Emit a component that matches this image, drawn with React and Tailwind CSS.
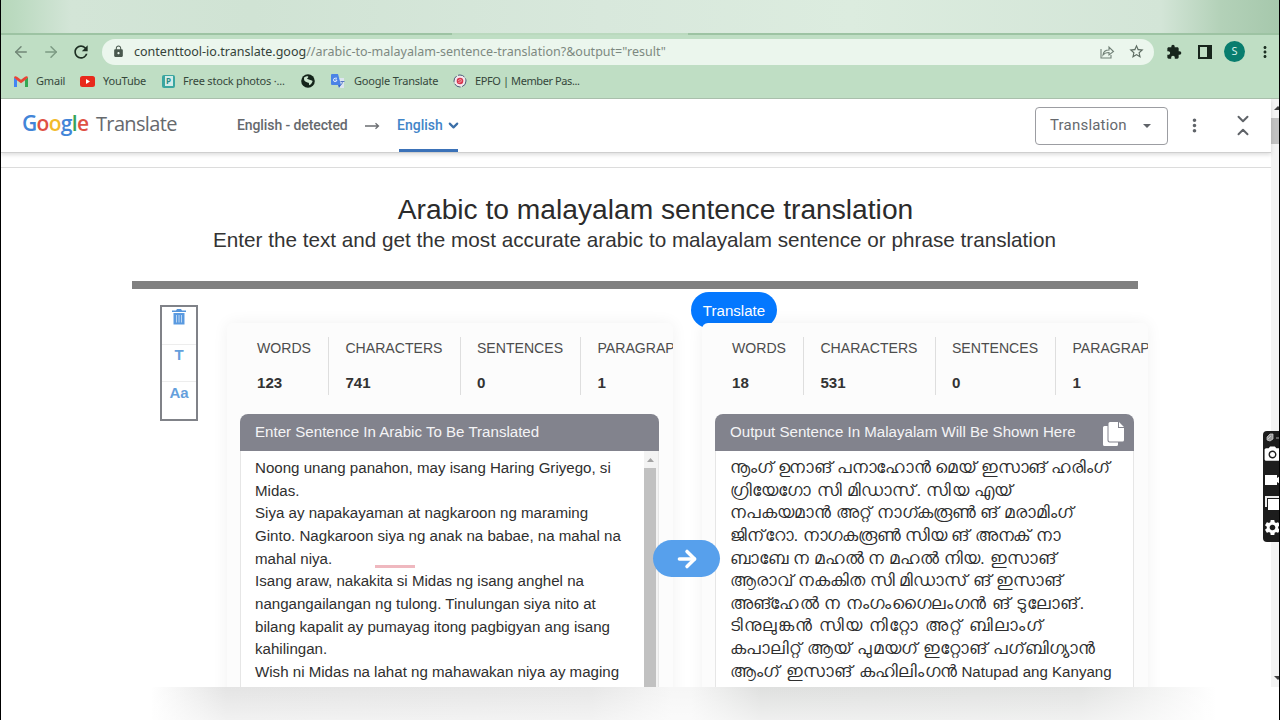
import React from 'react'
import { MdLock, MdRefresh, MdStarBorder, MdExtension, MdMoreVert, MdSettings, MdPhotoCamera } from 'react-icons/md'
import { ArrowLeft, ArrowRight, ChevronDown, ChevronUp } from 'lucide-react'

const sourceLines = [
  'Noong unang panahon, may isang Haring Griyego, si',
  'Midas.',
  'Siya ay napakayaman at nagkaroon ng maraming',
  'Ginto. Nagkaroon siya ng anak na babae, na mahal na',
  'mahal niya.',
  'Isang araw, nakakita si Midas ng isang anghel na',
  'nangangailangan ng tulong. Tinulungan siya nito at',
  'bilang kapalit ay pumayag itong pagbigyan ang isang',
  'kahilingan.',
  'Wish ni Midas na lahat ng mahawakan niya ay maging',
]

const outputLines = [
  { text: 'നൂംഗ് ഉനാങ് പനാഹോൻ മെയ് ഇസാങ് ഹരിംഗ്', spacing: 'tracking-[-0.35px]' },
  { text: 'ഗ്രിയേഗോ സി മിഡാസ്. സിയ എയ്', spacing: 'tracking-[0.2px]' },
  { text: 'നപകയമാൻ അറ്റ് നാഗ്കരൂൺ ങ് മരാമിംഗ്', spacing: 'tracking-normal' },
  { text: 'ജിന്\u200cറോ. നാഗകരൂൺ സിയ ങ് അനക് നാ', spacing: 'tracking-[-0.2px]' },
  { text: 'ബാബേ ന മഹൽ ന മഹൽ നിയ. ഇസാങ്', spacing: 'tracking-normal' },
  { text: 'ആരാവ് നകകിത സി മിഡാസ് ങ് ഇസാങ്', spacing: 'tracking-[-0.1px]' },
  { text: 'അങ്ഹേൽ ന നംഗംഗൈലംഗൻ ങ് ടുലോങ്.', spacing: 'tracking-[0.4px]' },
  { text: 'ടിനുലുങ്കൻ സിയ നിറ്റോ അറ്റ് ബിലാംഗ്', spacing: 'tracking-[1.05px]' },
  { text: 'കപാലിറ്റ് ആയ് പുമയഗ് ഇറ്റോങ് പഗ്\u200cബിഗ്യാൻ', spacing: 'tracking-[0.1px]' },
  { text: 'ആംഗ് ഇസാങ് കഹിലിംഗൻ', latin: 'Natupad ang Kanyang', spacing: 'tracking-[0.3px]' },
]

function BrowserBar() {
  return (
    <div className="h-[99px] shrink-0 bg-[#bfdec4] border-b border-[#a9bfac] font-['Noto_Sans',sans-serif]">
      <div className="h-[33px] bg-[linear-gradient(90deg,#b7d7bb_0px,#bbdac0_15px,#d3e5d7_70px,#d0e3d4_250px,#d8e8dc_600px,#dcecdf_850px,#d3e5d7_1160px,#b3d1b8_1220px,#a6c8ac_1278px)]" />
      <div className="h-[2px] flex">
        <div className="w-[451px] bg-[#9dc3a3]" />
        <div className="w-[236px] bg-[#bad9be]" />
        <div className="flex-1 bg-[#9dc3a3]" />
      </div>
      <div className="h-[33px] flex items-center pl-[11px]">
        <ArrowLeft size={18} strokeWidth={2} className="text-[#718777]" />
        <ArrowRight size={18} strokeWidth={2} className="ml-[12px] text-[#7c9a83]" />
        <MdRefresh size={20} className="ml-[11px] text-[#1d2f23]" />
        <div className="ml-[11px] w-[1052px] h-[26px] rounded-full bg-[#ebf6ed] flex items-center pl-[10px] pr-[9px]">
          <MdLock size={13} className="text-[#49584e]" />
          <span className="ml-[9px] mt-[1px] text-[12.5px] whitespace-nowrap text-[#7d8981] tracking-[0.01px]">
            <span className="text-[#344239]">contenttool-io.translate.goog</span>//arabic-to-malayalam-sentence-translation?&amp;output="result"
          </span>
          <svg className="ml-auto" width="16" height="16" viewBox="0 0 16 16" fill="none" stroke="#718077" strokeWidth="1.1">
            <path d="M2 5v9h10v-3M4 11c.5-4 3-5 6-5V3l4.500 4.500L10 11V8.500C7.500 8.500 5.500 9 4 11z" />
          </svg>
          <MdStarBorder size={17} className="ml-[13px] text-[#5c6b61]" />
        </div>
        <MdExtension size={16} className="ml-[12px] text-[#17251c]" />
        <svg className="ml-[16px]" width="14" height="14" viewBox="0 0 14 14">
          <path fill="#17251c" fillRule="evenodd" d="M0 0h14v14H0zM2 2v10h7V2z" />
        </svg>
        <div className="ml-[12px] w-[21px] h-[21px] rounded-full bg-[#087d6e] text-[#d6f1e8] text-[11px] flex items-center justify-center">S</div>
        <MdMoreVert size={18} className="ml-[11px] shrink-0 text-[#1d2f23]" />
      </div>
      <div className="h-[26px] flex items-center pl-[13px] text-[11px] tracking-[-0.19px] text-[#35473b] whitespace-nowrap">
        <svg width="14" height="11" viewBox="0 0 14 11">
          <path fill="#4285f4" d="M0 1.500L3 3.500V11H0z" />
          <path fill="#34a853" d="M11 3.500l3-2V11h-3z" />
          <path fill="#ea4335" d="M0 1.500C.5 0 1.800 0 3 .8l4 3 4-3c1.200-.8 2.500-.8 3 .7L11 4.200 7 7.200 3 4.200z" />
        </svg>
        <span className="ml-[8px] w-[44px]">Gmail</span>
        <svg width="15" height="11" viewBox="0 0 15 11">
          <rect width="15" height="11" rx="2.500" fill="#e8291c" />
          <path d="M6 3l4 2.500L6 8z" fill="#fff" />
        </svg>
        <span className="ml-[8px] w-[59px] tracking-[-0.2px]">YouTube</span>
        <div className="w-[13px] h-[13px] rounded-[2px] bg-[#3aa6a0] flex items-center justify-center">
          <div className="w-[8px] h-[10px] bg-[#d3ece8] text-[8px] leading-[10px] text-center text-[#238a84] font-bold">P</div>
        </div>
        <span className="ml-[8px] w-[118px]">Free stock photos ·...</span>
        <svg width="14" height="14" viewBox="0 0 14 14">
          <circle cx="7" cy="7" r="6.800" fill="#14241a" />
          <path d="M3 3.500c1.500-1 3-1.500 4-1.300.8.800-.2 1.500-1 2.200.6.700 1.800.600 2.600 1.400 1.100.7 2 .4 3 1.200-.3 1.500-1.200 3-3 4.300-.9-.6-.3-1.800-1-2.500C6 8.500 4.500 8 3.500 6.800 3 5.800 3 4.500 3 3.500z" fill="#c9e4cd" />
        </svg>
        <svg className="ml-[16px]" width="14" height="14" viewBox="0 0 14 14">
          <path fill="#dde5f0" d="M6 4h7v10H8z" />
          <path fill="#4b83e6" d="M1 0h6l3 11H1a1 1 0 0 1-1-1V1a1 1 0 0 1 1-1z" />
          <path fill="#2f65c9" d="M7 11h3l-2 3z" />
          <path d="M6 4.200H4.200a1.700 1.700 0 1 0 1.700 1.800H4.300" fill="none" stroke="#e7f0ff" />
          <path d="M9.500 7.500h4M11.500 7c0 2-1 3.500-2 4.500" fill="none" stroke="#5377c5" />
        </svg>
        <span className="ml-[9px] w-[99px]">Google Translate</span>
        <svg width="14" height="14" viewBox="0 0 14 14">
          <circle cx="7" cy="7" r="6" fill="#f1e8ed" stroke="#4c5c79" strokeDasharray="7 1.500" />
          <circle cx="7" cy="7" r="3.300" fill="#d8364e" />
          <path d="M5 7l2-1.500 2 1M5.500 8.500l3-1" stroke="#f5b8bd" fill="none" strokeWidth=".8" />
        </svg>
        <span className="ml-[8px] tracking-[-0.4px]">EPFO | Member Pas...</span>
      </div>
    </div>
  )
}

function TranslateHeader() {
  return (
    <div className="relative h-[54px] shrink-0 bg-white border-b border-[#cfcfcf] shadow-[0_2px_4px_rgba(0,0,0,0.13)] flex items-center font-[Roboto,sans-serif] text-[#66696d]">
      <div className="ml-[21px] -mt-[3px] w-[215px] flex items-baseline whitespace-nowrap font-['Open_Sans',sans-serif]">
        <span className="w-[74px] text-[21px] font-semibold tracking-[-0.7px]">
          <span className="text-[#4285d8]">G</span>
          <span className="text-[#df5145]">o</span>
          <span className="text-[#f2bb2b]">o</span>
          <span className="text-[#4285d8]">g</span>
          <span className="text-[#38a35a]">l</span>
          <span className="text-[#df5145]">e</span>
        </span>
        <span className="text-[20px] tracking-[-0.65px]">Translate</span>
      </div>
      <span className="w-[128px] text-[14px] tracking-[-0.1px] font-medium whitespace-nowrap">English - detected</span>
      <svg width="15" height="8" viewBox="0 0 15 8" fill="none" stroke="#6b6e72" strokeWidth="1.300">
        <path d="M0 4h13M10.500 1.200L13.500 4l-3 2.800" />
      </svg>
      <div className="ml-[19px] h-full w-[59px] border-b-[3px] border-[#3b72b8] pt-[2px] flex items-center gap-[3px] text-[14px] font-medium text-[#4285c8]">
        <span className="-ml-[2px]">English</span>
        <ChevronDown size={15} strokeWidth={3.400} className="shrink-0 text-[#3b6fa8]" />
      </div>
      <div className="ml-auto w-[133px] h-[38px] border border-[#9c9da2] rounded-[4px] flex items-center justify-between pl-[14px] pr-[16px] text-[15px] tracking-[0.2px]">
        Translation
        <svg width="8" height="4" viewBox="0 0 8 4"><path d="M0 0h8L4 4z" fill="#5f6368" /></svg>
      </div>
      <MdMoreVert size={21} className="ml-[16px] text-[#5f6368]" />
      <div className="ml-[29px] mr-[19px] flex flex-col text-[#5f6368]">
        <ChevronDown size={18} strokeWidth={2.600} className="-mb-[5px]" />
        <ChevronUp size={18} strokeWidth={2.600} />
      </div>
    </div>
  )
}

function Stat({ label, value }) {
  return (
    <div className="shrink-0 h-[58px] pr-[17px] border-r border-[#dedede]">
      <div className="text-[14.1px] leading-[22px] text-[#4d4d4d]">{label}</div>
      <div className="mt-[13px] text-[15.1px] leading-[22px] font-bold text-[#333]">{value}</div>
    </div>
  )
}

function Panel({ words, characters, title, icon, children }) {
  return (
    <div className="relative w-[446px] h-[400px] shrink-0 bg-[#fcfcfc] rounded-[6px] shadow-[0_0_16px_rgba(0,0,0,0.06)]">
      <div className="h-[91px] pt-[14px] pl-[30px] flex gap-[16.4px] overflow-hidden">
        <Stat label="WORDS" value={words} />
        <Stat label="CHARACTERS" value={characters} />
        <Stat label="SENTENCES" value="0" />
        <Stat label="PARAGRAPHS" value="1" />
      </div>
      <div className="ml-[13px] w-[419px]">
        <div className="h-[37px] pl-[15px] pr-[10px] rounded-t-[8px] bg-[#82838d] text-[15.1px] text-[#f4f4f6] flex items-center justify-between">
          <span>{title}</span>
          {icon}
        </div>
        <div className="h-[260px] bg-white border border-t-0 border-[#e6e6e6] flex justify-between pl-[14px]">
          {children}
        </div>
      </div>
    </div>
  )
}

function Dock() {
  return (
    <div className="absolute right-0 top-[431px] w-[16px] h-[111px] rounded-l-[4px] bg-[#1d1d1d] overflow-hidden text-white">
      <div className="w-[24px] flex flex-col">
        <svg width="16" height="14" viewBox="0 0 16 14">
          <path d="M4 9V6l3-3h3v5l-3 2zM5 8l3-3" fill="#999" stroke="#ddd" strokeWidth=".7" />
          <path d="M13 7h3" stroke="#aaa" />
        </svg>
        <MdPhotoCamera size={19} />
        <svg className="mt-[10px]" width="20" height="12" viewBox="0 0 20 12">
          <path d="M2 1h12v3l3-2v8l-3-2v3H2z" fill="#fff" />
        </svg>
        <svg className="mt-[9px]" width="20" height="16" viewBox="0 0 20 16">
          <path d="M2 1h14v2H4v9H2z" fill="#eee" />
          <path d="M5 4h12v11H5z" fill="#fff" />
        </svg>
        <MdSettings size={19} className="mt-[7px]" />
      </div>
    </div>
  )
}

export default function App() {
  return (
    <div className="relative w-[1280px] h-[720px] overflow-hidden bg-white border-x border-black flex flex-col font-['Liberation_Sans',Arial,sans-serif]">
      <BrowserBar />
      <div className="h-[588px] shrink-0 flex overflow-hidden">
        <div className="w-[1270px] flex flex-col">
          <TranslateHeader />
          <div className="h-[15px] shrink-0 border-b border-[#dcdcdc]" />
          <h1 className="mt-[24px] pl-[39px] text-center text-[28.2px] leading-[34px] text-[#2b2b2b]">Arabic to malayalam sentence translation</h1>
          <p className="mt-px pr-[3px] text-center text-[20.7px] leading-[25px] text-[#333]">
            Enter the text and get the most accurate arabic to malayalam sentence or phrase translation
          </p>
          <div className="ml-[131px] mt-[29px] w-[1006px] h-[8px] shrink-0 bg-[#808080]" />
          <div className="relative flex pl-[159px]">
            <div className="mt-[16px] w-[38px] h-[116px] shrink-0 border-2 border-[#808288] text-[15px] font-bold text-[#659fdc] text-center">
              <div className="h-[38px] border-b border-[#ededed] flex justify-center pt-[1px]">
                <svg width="14" height="17" viewBox="0 0 14 17">
                  <path d="M0 2.500h4L5 1h4l1 1.500h4V4H0z" fill="#5394db" />
                  <path d="M1.500 5h11v11.500h-11z" fill="#5a9ae0" />
                  <path d="M4.500 7v7.500M7 7v7.500M9.500 7v7.500" stroke="#b9d5f3" />
                </svg>
              </div>
              <div className="h-[37px] border-b border-[#ededed] leading-[20px]">T</div>
              <div className="leading-[22px]">Aa</div>
            </div>
            <div className="absolute left-[690px] top-[3px] w-[86px] h-[36px] rounded-full bg-[#0478ff] text-white text-[15.1px] leading-[37px] text-center">Translate</div>
            <div className="mt-[34px] ml-[29px] flex gap-[29px]">
              <Panel words="123" characters="741" title="Enter Sentence In Arabic To Be Translated">
                <div className="pt-[6px] text-[15.1px] leading-[22.65px] text-[#2f2f2f] whitespace-nowrap">
                  {sourceLines.map((line) => <div key={line}>{line}</div>)}
                </div>
                <div className="w-[14px] pr-[2px] bg-[#f3f3f3]">
                  <div className="h-[17px] flex items-center justify-center">
                    <svg width="7" height="4" viewBox="0 0 7 4"><path d="M0 4l3.500-4L7 4z" fill="#a3a3a3" /></svg>
                  </div>
                  <div className="h-[243px] bg-[#c1c1c1]" />
                </div>
              </Panel>
              <Panel
                words="18"
                characters="531"
                title="Output Sentence In Malayalam Will Be Shown Here"
                icon={
                  <svg className="mt-[3px]" width="21" height="24" viewBox="0 0 21 24" fill="#fff">
                    <path d="M7 0h8v6h6v12a1.500 1.500 0 0 1-1.500 1.500H7A1.500 1.500 0 0 1 5.500 18V1.500A1.500 1.500 0 0 1 7 0zM16 0l5 5h-5z" />
                    <path d="M4.500 4H1.500A1.500 1.500 0 0 0 0 5.500v17A1.500 1.500 0 0 0 1.500 24h12a1.500 1.500 0 0 0 1.500-1.500v-2H6.500a2 2 0 0 1-2-2z" />
                  </svg>
                }
              >
                <div className="pt-[5px] text-[17.3px] leading-[22.65px] text-[#2f2f2f] whitespace-nowrap">
                  {outputLines.map(({ text, latin, spacing }) => (
                    <div key={text} className="h-[22.65px]">
                      <span className={spacing}>{text}</span>
                      {latin && <span className="text-[15.1px]"> {latin}</span>}
                    </div>
                  ))}
                </div>
              </Panel>
            </div>
            <div className="absolute left-[652px] top-[251px] w-[67px] h-[37px] rounded-full bg-[#57a0ec] flex items-center justify-center text-white">
              <ArrowRight size={26} strokeWidth={3.200} />
            </div>
            <div className="absolute left-[374px] top-[276px] w-[40px] h-[3px] bg-[#efb8bf]" />
          </div>
        </div>
        <div className="w-[8px] bg-[#f3f3f3] flex flex-col items-end overflow-hidden">
          <svg className="mt-[7px]" width="5" height="4" viewBox="0 0 5 4"><path d="M0 4l4-4 4 4z" fill="#444" /></svg>
          <div className="mt-[8px] w-[8px] h-[26px] bg-[#c1c1c1]" />
          <svg className="mt-auto mb-[7px]" width="5" height="4" viewBox="0 0 5 4"><path d="M0 0h8L4 4z" fill="#444" /></svg>
        </div>
      </div>
      <div className="h-[33px] shrink-0 bg-[linear-gradient(90deg,#fff_150px,#e4e4e4_225px,#e7e7e7_590px,#f6f6f6_670px,#f6f6f6_690px,#dfe0df_760px,#e2e3e2_1080px,#fff_1215px)]">
        <div className="h-full bg-linear-to-b from-transparent to-white/50" />
      </div>
      <Dock />
    </div>
  )
}
